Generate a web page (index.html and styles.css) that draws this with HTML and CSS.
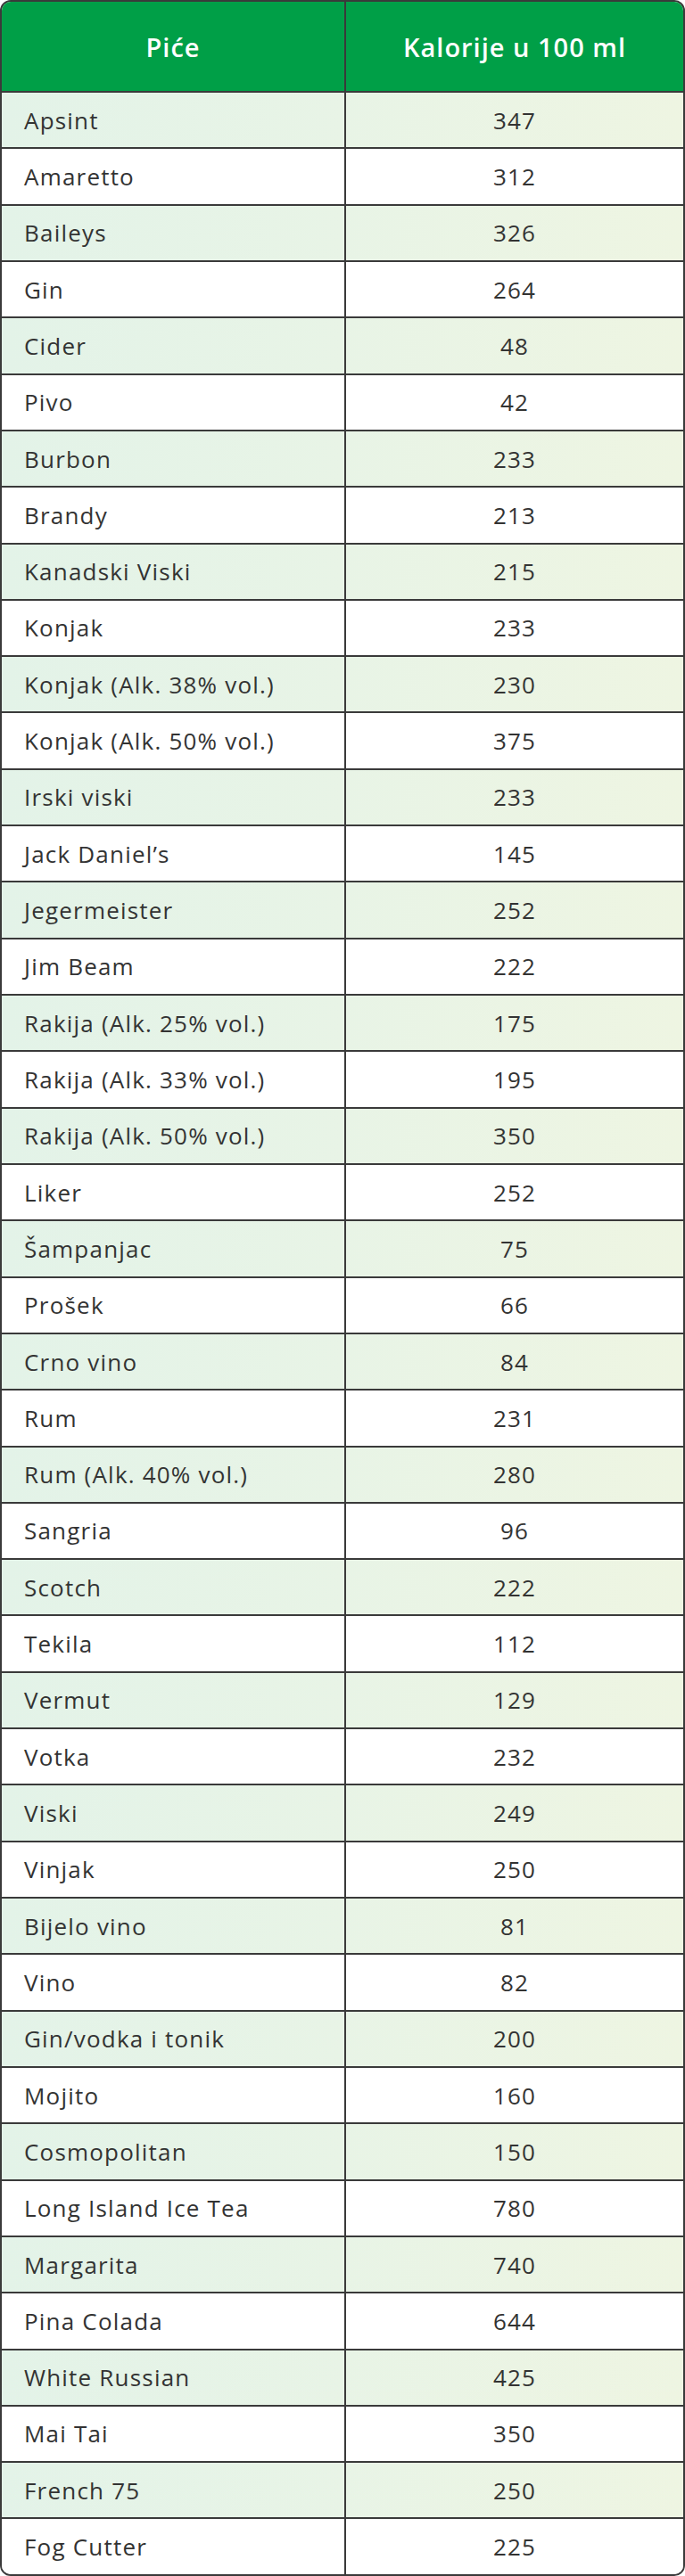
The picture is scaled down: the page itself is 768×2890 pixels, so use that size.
FILE: index.html
```html
<!DOCTYPE html>
<html lang="hr">
<head>
<meta charset="utf-8">
<title>Kalorije u alkoholnim pićima</title>
<link rel="stylesheet" href="styles.css">
</head>
<body>
<div class="wrap">
<table class="cal">
<thead>
<tr><th class="c1">Piće</th><th class="c2">Kalorije u 100 ml</th></tr>
</thead>
<tbody>
<tr><td class="c1">Apsint</td><td class="c2">347</td></tr>
<tr><td class="c1">Amaretto</td><td class="c2">312</td></tr>
<tr><td class="c1">Baileys</td><td class="c2">326</td></tr>
<tr><td class="c1">Gin</td><td class="c2">264</td></tr>
<tr><td class="c1">Cider</td><td class="c2">48</td></tr>
<tr><td class="c1">Pivo</td><td class="c2">42</td></tr>
<tr><td class="c1">Burbon</td><td class="c2">233</td></tr>
<tr><td class="c1">Brandy</td><td class="c2">213</td></tr>
<tr><td class="c1">Kanadski Viski</td><td class="c2">215</td></tr>
<tr><td class="c1">Konjak</td><td class="c2">233</td></tr>
<tr><td class="c1">Konjak (Alk. 38% vol.)</td><td class="c2">230</td></tr>
<tr><td class="c1">Konjak (Alk. 50% vol.)</td><td class="c2">375</td></tr>
<tr><td class="c1">Irski viski</td><td class="c2">233</td></tr>
<tr><td class="c1">Jack Daniel’s</td><td class="c2">145</td></tr>
<tr><td class="c1">Jegermeister</td><td class="c2">252</td></tr>
<tr><td class="c1">Jim Beam</td><td class="c2">222</td></tr>
<tr><td class="c1">Rakija (Alk. 25% vol.)</td><td class="c2">175</td></tr>
<tr><td class="c1">Rakija (Alk. 33% vol.)</td><td class="c2">195</td></tr>
<tr><td class="c1">Rakija (Alk. 50% vol.)</td><td class="c2">350</td></tr>
<tr><td class="c1">Liker</td><td class="c2">252</td></tr>
<tr><td class="c1">Šampanjac</td><td class="c2">75</td></tr>
<tr><td class="c1">Prošek</td><td class="c2">66</td></tr>
<tr><td class="c1">Crno vino</td><td class="c2">84</td></tr>
<tr><td class="c1">Rum</td><td class="c2">231</td></tr>
<tr><td class="c1">Rum (Alk. 40% vol.)</td><td class="c2">280</td></tr>
<tr><td class="c1">Sangria</td><td class="c2">96</td></tr>
<tr><td class="c1">Scotch</td><td class="c2">222</td></tr>
<tr><td class="c1">Tekila</td><td class="c2">112</td></tr>
<tr><td class="c1">Vermut</td><td class="c2">129</td></tr>
<tr><td class="c1">Votka</td><td class="c2">232</td></tr>
<tr><td class="c1">Viski</td><td class="c2">249</td></tr>
<tr><td class="c1">Vinjak</td><td class="c2">250</td></tr>
<tr><td class="c1">Bijelo vino</td><td class="c2">81</td></tr>
<tr><td class="c1">Vino</td><td class="c2">82</td></tr>
<tr><td class="c1">Gin/vodka i tonik</td><td class="c2">200</td></tr>
<tr><td class="c1">Mojito</td><td class="c2">160</td></tr>
<tr><td class="c1">Cosmopolitan</td><td class="c2">150</td></tr>
<tr><td class="c1">Long Island Ice Tea</td><td class="c2">780</td></tr>
<tr><td class="c1">Margarita</td><td class="c2">740</td></tr>
<tr><td class="c1">Pina Colada</td><td class="c2">644</td></tr>
<tr><td class="c1">White Russian</td><td class="c2">425</td></tr>
<tr><td class="c1">Mai Tai</td><td class="c2">350</td></tr>
<tr><td class="c1">French 75</td><td class="c2">250</td></tr>
<tr><td class="c1">Fog Cutter</td><td class="c2">225</td></tr>
</tbody>
</table>
</div>
</body>
</html>
```

FILE: styles.css
```css
html, body {
  margin: 0;
  padding: 0;
  background: #ffffff;
}

.wrap {
  width: 768px;
  box-sizing: border-box;
  border: 2px solid #3a3a3a;
  border-radius: 12px;
  overflow: hidden;
}

.cal {
  width: 100%;
  border-collapse: separate;
  border-spacing: 0;
  table-layout: fixed;
  font-family: "Open Sans", "Noto Sans", sans-serif;
  color: #333333;
}

.cal .c1 {
  width: 384px;
  border-right: 2px solid #3a3a3a;
  text-align: left;
  padding: 0 0 0 25px;
}

.cal .c2 {
  text-align: center;
  padding: 0;
}

.cal th {
  height: 100px;
  background: #009f47;
  color: #ffffff;
  font-size: 29px;
  font-weight: 600;
  letter-spacing: 1px;
  text-align: center;
  border-bottom: 2px solid #3a3a3a;
  box-sizing: content-box;
}

.cal th.c1 {
  text-align: center;
  padding: 0;
}

.cal td {
  height: 61.32px;
  box-sizing: content-box;
  font-size: 26px;
  font-weight: 400;
  letter-spacing: 1.2px;
  border-bottom: 2px solid #3a3a3a;
  vertical-align: middle;
  padding-top: 0;
  padding-bottom: 0;
  line-height: 1;
}

.cal tbody tr:last-child td {
  border-bottom: none;
}

.cal tbody tr:nth-child(odd) {
  background: linear-gradient(90deg, #e3f3e8 0%, #e8f4e6 50%, #eef5e2 100%);
}

.cal tbody tr:nth-child(even) {
  background: #ffffff;
}
```
